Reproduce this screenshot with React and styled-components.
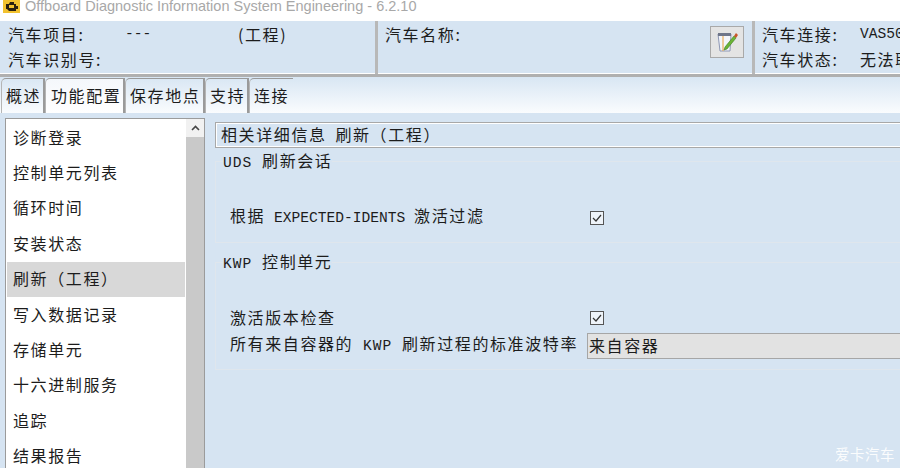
import React from "react";
import styled, { createGlobalStyle } from "styled-components";

const Global = createGlobalStyle`
  html, body { margin: 0; padding: 0; background: #d6e4f2; }
  body { font-family: "Noto Sans CJK SC", "Liberation Sans", sans-serif; color: #1c1c1c; }
`;

const Page = styled.div`
  position: relative;
  width: 900px;
  height: 468px;
  overflow: hidden;
  background: #d6e4f2;
  font-size: 16px;
  letter-spacing: 1.6px;
  line-height: 24px;
`;

const TitleBar = styled.div`
  display: flex;
  align-items: flex-start;
  gap: 5px;
  height: 21px;
  padding-left: 3px;
  box-sizing: border-box;
  background: #fff;
`;

const TitleText = styled.span`
  font-family: "Liberation Sans", sans-serif;
  font-size: 14.5px;
  letter-spacing: 0;
  line-height: 12px;
  color: #a8a8a8;
`;

const Header = styled.div`
  display: flex;
  height: 56px;
  box-sizing: border-box;
  border-bottom: 3px solid #b0b0b0;
  box-shadow: inset 0 -1px 0 #fff;
`;

const HeaderCell = styled.div`
  flex: ${(p) => (p.$grow ? "1 0 0" : "none")};
  width: ${(p) => p.$w}px;
  box-sizing: border-box;
  padding: 1px 0 0 ${(p) => p.$pad}px;
  position: relative;
  display: flex;
  border-right: ${(p) => (p.$grow ? "none" : "3px solid #b8b8b8")};
  height: 53px;
`;

const InfoGrid = styled.div`
  display: grid;
  grid-template-columns: ${(p) => p.$cols};
  grid-auto-rows: 25px;
  white-space: nowrap;
`;

const Mono = styled.span`
  font-family: "Liberation Mono", monospace;
  font-size: 14.6px;
  letter-spacing: ${(p) => p.$spacing || 0}px;
  white-space: pre;
`;

const NoteButton = styled.div`
  position: absolute;
  left: 332px;
  top: 5px;
  width: 34px;
  height: 32px;
  box-sizing: border-box;
  display: flex;
  align-items: center;
  justify-content: center;
  background: #e4e4e4;
  border: 1px solid #a9a9a9;
`;

const TabStrip = styled.div`
  display: flex;
  height: 36px;
  padding-left: 1px;
  box-sizing: border-box;
  background: linear-gradient(#d8e6f3, #fafcfe);
`;

const Tab = styled.div`
  width: ${(p) => p.$w}px;
  box-sizing: border-box;
  padding-left: ${(p) => (p.$active ? 5 : 4)}px;
  padding-top: 4px;
  margin-top: 1px;
  white-space: nowrap;
  border-top: 1px solid #9a9a9a;
  border-left: 1px solid #b5b5b5;
  border-right: 2px solid #9a9a9a;
  border-top-left-radius: 5px;
  background: ${(p) => (p.$active ? "linear-gradient(#f4f7fb, #fff)" : "transparent")};
  ${(p) => p.$last && "border-right: none;"}
`;

const Body = styled.div`
  display: flex;
  gap: 10px;
  padding: 5px 0 0 5px;
`;

const ListBox = styled.div`
  display: flex;
  width: 200px;
  height: 360px;
  flex: none;
  box-sizing: border-box;
  border: 1px solid #9b9b9b;
  border-bottom: none;
  background: #fff;
`;

const List = styled.div`
  flex: 1;
  padding: 1px 1px 0 1px;
`;

const ListItem = styled.div`
  height: 35.4px;
  box-sizing: border-box;
  display: flex;
  align-items: center;
  padding: 0 0 2px 6px;
  white-space: nowrap;
  background: ${(p) => (p.$selected ? "#d8d8d8" : "transparent")};
`;

const ScrollBar = styled.div`
  width: 18px;
  display: flex;
  flex-direction: column;
  background: #c9c9c9;
`;

const ScrollButton = styled.div`
  height: 18px;
  display: flex;
  align-items: center;
  justify-content: center;
  background: #f1f1f1;
`;

const Details = styled.div`
  width: 700px;
  flex: none;
  padding-top: 4px;
`;

const DetailsTitle = styled.div`
  height: 26px;
  box-sizing: border-box;
  padding-left: 5px;
  display: flex;
  align-items: center;
  border: 1px solid #a8a8a8;
  box-shadow: inset 0 0 0 1px #fff;
  white-space: pre;
`;

const Group = styled.fieldset`
  margin: ${(p) => p.$top}px 0 0;
  padding: 0 0 0 14px;
  height: ${(p) => p.$h}px;
  box-sizing: border-box;
  border: 1px solid #dfe6ed;
  min-width: 0;
`;

const GroupTitle = styled.legend`
  padding: 0;
  margin-left: -7px;
  line-height: 24px;
  white-space: nowrap;
`;

const Rows = styled.div`
  display: flex;
  flex-direction: column;
  padding-top: ${(p) => p.$top}px;
`;

const Row = styled.div`
  display: grid;
  grid-template-columns: 357px 1fr;
  align-items: center;
  height: ${(p) => p.$h || 28}px;
  white-space: nowrap;
`;

const RowLabel = styled.span`
  padding-bottom: 2px;
`;

const CheckBox = styled.div`
  width: 14px;
  height: 14px;
  margin-left: 3px;
  box-sizing: border-box;
  border: 1px solid #555;
  background: #eef3f9;
  display: flex;
  align-items: center;
  justify-content: center;
`;

const Select = styled.div`
  height: 26px;
  box-sizing: border-box;
  padding: 0 0 2px 1px;
  display: flex;
  align-items: center;
  background: #e2e2e2;
  border: 1px solid #a6a6a6;
  border-right: none;
`;

const Watermark = styled.div`
  position: absolute;
  right: 5px;
  bottom: 5px;
  color: #fff;
  font-size: 14.4px;
  letter-spacing: 0.6px;
  line-height: 18px;
  opacity: 0.9;
`;

const EngineIcon = () => (
  <svg width="17" height="13" viewBox="0 0 17 13" style={{ flex: "none" }}>
    <rect width="17" height="13" fill="#f2c230" />
    <path d="M3 4h3l1-2h4v2h2v2l2 0v3h-2v2H6L4 9H3z" fill="#2a2010" />
    <rect x="6" y="5" width="5" height="3" fill="#f2c230" />
  </svg>
);

const NoteIcon = () => (
  <svg width="22" height="22" viewBox="0 0 22 22">
    <path d="M2 3h13l-1 17H4z" fill="#f4f6fb" stroke="#8d97b5" strokeWidth="1" />
    <path d="M2 2h13v3H2z" fill="#6f7689" />
    <path d="M7 5v15" stroke="#e9a23c" strokeWidth="1" />
    <path d="M9 16l-1 3 3-1L20 7l-2-2z" fill="#6bb536" stroke="#3f7d22" strokeWidth="0.6" />
    <path d="M18 5l2-3 2 2-2 3z" fill="#c9572a" />
  </svg>
);

const Check = () => (
  <svg width="10" height="8" viewBox="0 0 10 8">
    <path d="M1 4l3 3 5-6" fill="none" stroke="#333" strokeWidth="1.2" />
  </svg>
);

const ChevronUp = () => (
  <svg width="9" height="6" viewBox="0 0 9 6">
    <path d="M1 5l3.5-3.5L8 5" fill="none" stroke="#444" strokeWidth="1.6" />
  </svg>
);

const items = ["诊断登录", "控制单元列表", "循环时间", "安装状态", "刷新（工程）", "写入数据记录", "存储单元", "十六进制服务", "追踪", "结果报告"];

const tabs = [
  { label: "概述", w: 44 },
  { label: "功能配置", w: 80, active: true },
  { label: "保存地点", w: 80 },
  { label: "支持", w: 44 },
  { label: "连接", w: 44, last: true },
];

export default function App() {
  return (
    <Page>
      <Global />
      <TitleBar>
        <EngineIcon />
        <TitleText>Offboard Diagnostic Information System Engineering - 6.2.10</TitleText>
      </TitleBar>
      <Header>
        <HeaderCell $w={378} $pad={8}>
          <InfoGrid $cols="117px 113px auto">
            <span>汽车项目:</span>
            <Mono>---</Mono>
            <span>(工程)</span>
            <span>汽车识别号:</span>
          </InfoGrid>
        </HeaderCell>
        <HeaderCell $w={377} $pad={7}>
          <InfoGrid $cols="auto">
            <span>汽车名称:</span>
          </InfoGrid>
          <NoteButton>
            <NoteIcon />
          </NoteButton>
        </HeaderCell>
        <HeaderCell $grow $pad={7}>
          <InfoGrid $cols="98px auto">
            <span>汽车连接:</span>
            <Mono>VAS5054</Mono>
            <span>汽车状态:</span>
            <span>无法联系</span>
          </InfoGrid>
        </HeaderCell>
      </Header>
      <TabStrip>
        {tabs.map((t) => (
          <Tab key={t.label} $w={t.w} $active={t.active} $last={t.last}>
            {t.label}
          </Tab>
        ))}
      </TabStrip>
      <Body>
        <ListBox>
          <List>
            {items.map((item, i) => (
              <ListItem key={item} $selected={i === 4}>
                {item}
              </ListItem>
            ))}
          </List>
          <ScrollBar>
            <ScrollButton>
              <ChevronUp />
            </ScrollButton>
          </ScrollBar>
        </ListBox>
        <Details>
          <DetailsTitle>
            <span>
              相关详细信息<Mono> </Mono>刷新（工程）
            </span>
          </DetailsTitle>
          <Group $top={0} $h={95}>
            <GroupTitle>
              <Mono $spacing={1}>UDS </Mono>刷新会话
            </GroupTitle>
            <Rows $top={28}>
              <Row>
                <RowLabel>
                  根据<Mono> EXPECTED-IDENTS </Mono>激活过滤
                </RowLabel>
                <CheckBox>
                  <Check />
                </CheckBox>
              </Row>
            </Rows>
          </Group>
          <Group $top={6} $h={121}>
            <GroupTitle>
              <Mono $spacing={1}>KWP </Mono>控制单元
            </GroupTitle>
            <Rows $top={28}>
              <Row $h={27}>
                <RowLabel>激活版本检查</RowLabel>
                <CheckBox>
                  <Check />
                </CheckBox>
              </Row>
              <Row>
                <RowLabel>
                  所有来自容器的<Mono $spacing={1}> KWP </Mono>刷新过程的标准波特率
                </RowLabel>
                <Select>来自容器</Select>
              </Row>
            </Rows>
          </Group>
        </Details>
      </Body>
      <Watermark>爱卡汽车</Watermark>
    </Page>
  );
}
